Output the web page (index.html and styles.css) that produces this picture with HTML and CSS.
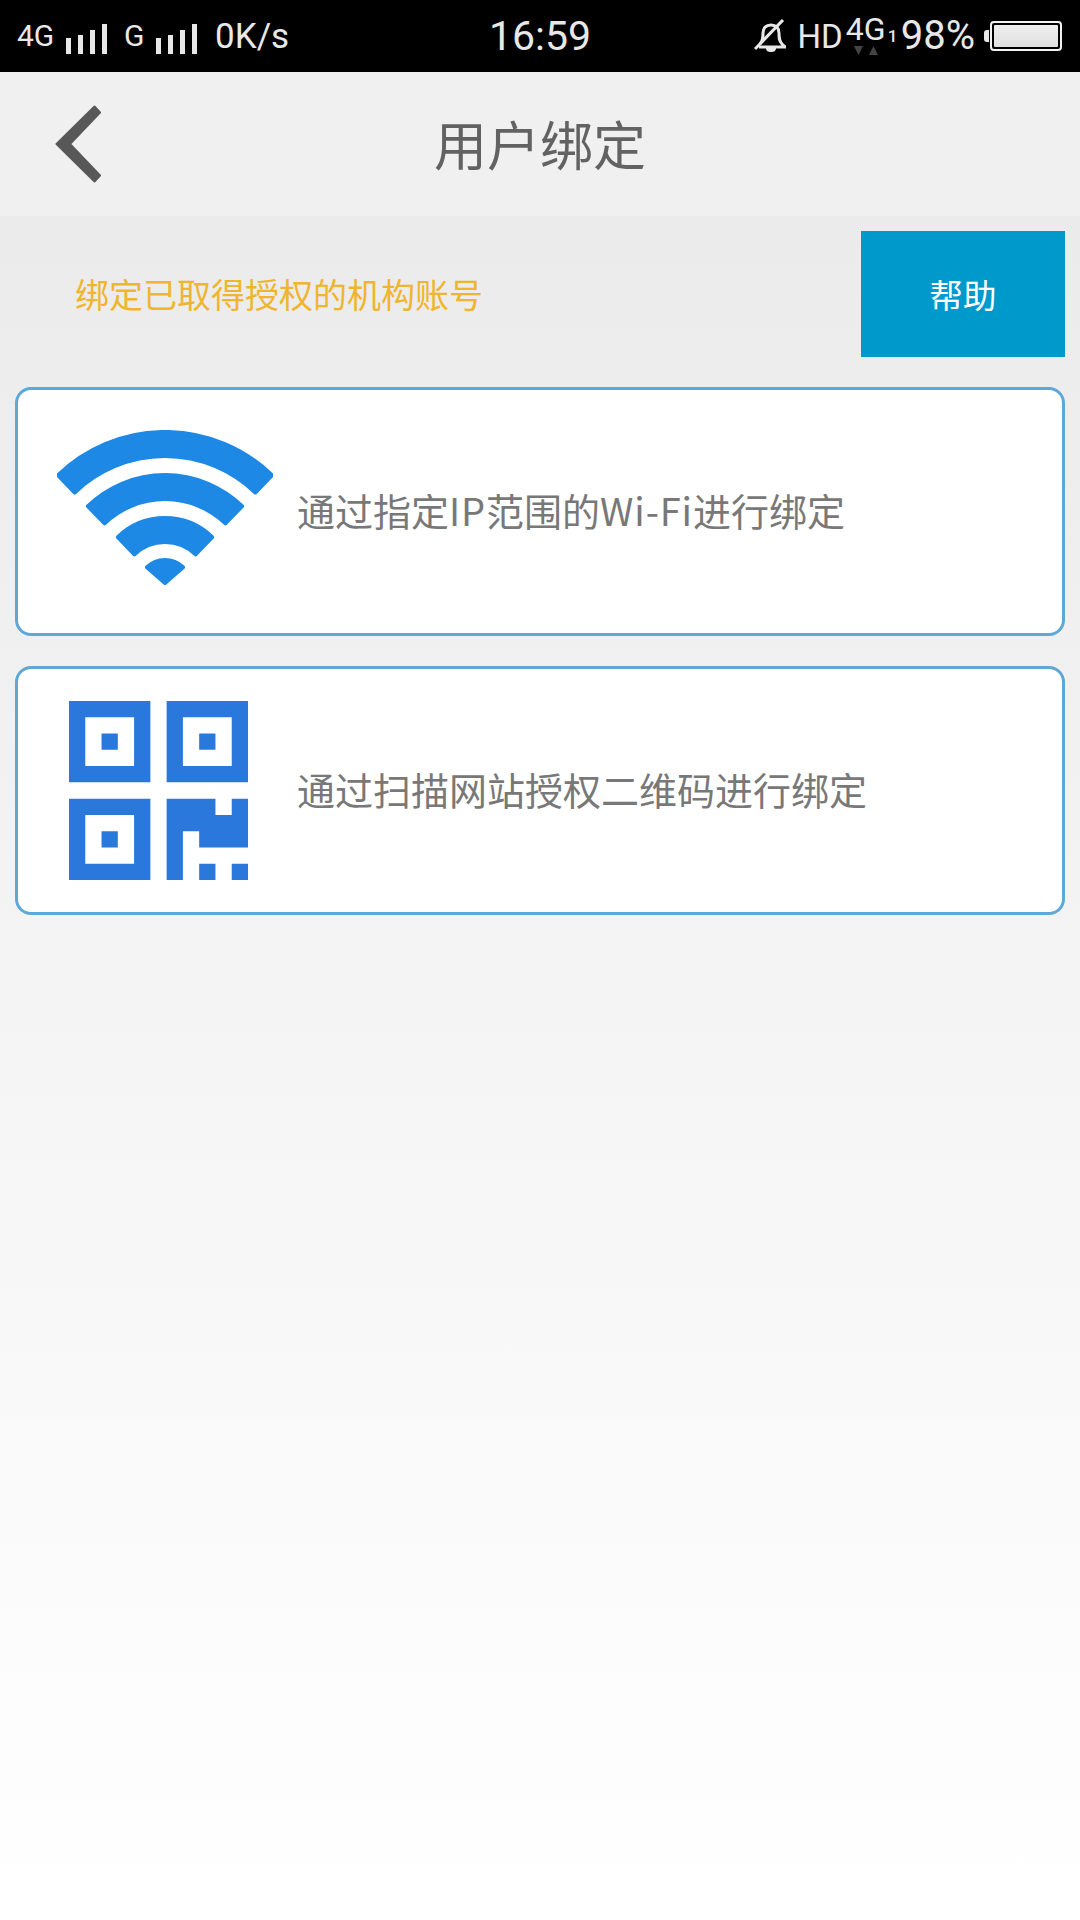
FILE: index.html
```html
<!DOCTYPE html>
<html lang="zh-CN">
<head>
<meta charset="utf-8">
<title>用户绑定</title>
<link rel="stylesheet" href="styles.css">
</head>
<body>
<div class="page">
  <div class="status">
    <div class="status-left">
      <span class="st-txt net-a">4G</span>
      <svg class="signal" viewBox="0 0 41 30"><path d="M0 14h5v16H0zM12 11h5v19h-5zM24 6h5v24h-5zM36 0h5v30h-5z"/></svg>
      <span class="st-txt net-b">G</span>
      <svg class="signal" viewBox="0 0 41 30"><path d="M0 14h5v16H0zM12 11h5v19h-5zM24 6h5v24h-5zM36 0h5v30h-5z"/></svg>
      <span class="st-txt speed">0K/s</span>
    </div>
    <div class="status-time">16:59</div>
    <div class="status-right">
      <svg class="bell" viewBox="0 0 34 34"><path class="bell-line" d="M6 25c3-3 3-6 3-11 0-5 3-8 8-8s8 3 8 8c0 5 0 8 3 11 1 1 3 3 4 3H5"/><path class="bell-line" d="M1 30 29 1"/><path class="bell-fill" d="M12 29h10c0 3-2 4-5 4s-5-1-5-4z"/></svg>
      <span class="st-txt hd">HD</span>
      <div class="net-stack">
        <span class="st-txt net-top">4G</span>
        <svg class="arrows" viewBox="0 0 24 10"><path d="M0 0h9L4.500 9zM15 9l4.500-9L24 9z"/></svg>
      </div>
      <span class="st-txt sim">1</span>
      <span class="st-txt batt-txt">98%</span>
      <div class="battery-nub"></div>
      <div class="battery"><div class="battery-fill"></div></div>
    </div>
  </div>

  <div class="header">
    <div class="back">
      <svg class="back-icon" viewBox="0 0 46 78"><path d="M1.500 39 39.500 1.500 45 7.500 15 39 45 70.500 39.500 76.500Z"/></svg>
    </div>
    <div class="title">用户绑定</div>
    <div class="header-end"></div>
  </div>

  <main class="content">
    <div class="notice">
      <span class="notice-text">绑定已取得授权的机构账号</span>
      <button class="help">帮助</button>
    </div>

    <div class="card">
      <div class="card-icon">
        <svg class="wifi" viewBox="0 0 216 157">
          <path d="M1 45.200A154 154 0 0 1 215 45.200L198.300 62.500A130 130 0 0 0 17.700 62.500Z"/>
          <path d="M30.900 76.200A111 111 0 0 1 185.100 76.200L168.400 93.400A87 87 0 0 0 47.600 93.400Z"/>
          <path d="M60.800 107.100A68 68 0 0 1 155.200 107.100L138.600 124.300A44 44 0 0 0 77.400 124.300Z"/>
          <path d="M89.900 137.300A26 26 0 0 1 126.100 137.300L108 153Z"/>
        </svg>
      </div>
      <span class="card-text">通过指定<span class="latin">IP</span>范围的<span class="latin">Wi-Fi</span>进行绑定</span>
    </div>

    <div class="card">
      <div class="card-icon">
        <svg class="qr" viewBox="0 0 11 11">
          <path fill-rule="evenodd" d="M0 0h5v5H0zM1 1v3h3V1zM2 2h1v1H2zM6 0h5v5H6zM7 1v3h3V1zM8 2h1v1H8zM0 6h5v5H0zM1 7v3h3V7zM2 8h1v1H2z"/>
          <path d="M6 6h3v1h1V6h1v3H8V8H7v3H6zM8 10h1v1H8zM10 10h1v1h-1z"/>
        </svg>
      </div>
      <span class="card-text">通过扫描网站授权二维码进行绑定</span>
    </div>
  </main>
</div>
</body>
</html>
```

FILE: styles.css
```css
* { box-sizing: border-box; }
html, body { margin: 0; padding: 0; }
body {
  width: 1080px;
  height: 1920px;
  overflow: hidden;
  font-family: "Noto Sans CJK SC", "Noto Sans", sans-serif;
}
.page { display: flex; flex-direction: column; height: 1920px; }

/* status bar */
.status {
  height: 72px;
  background: #000;
  display: grid;
  grid-template-columns: 1fr auto 1fr;
  align-items: center;
  color: #e8e8e8;
  flex: none;
}
.status-left { display: flex; align-items: center; padding-left: 17px; }
.status-right { display: flex; align-items: center; justify-content: flex-end; padding-right: 18px; }
.st-txt { font-family: Roboto, "Liberation Sans", sans-serif; font-weight: 400; line-height: 1; }
.net-a { font-size: 30px; width: 49px; }
.net-b { font-size: 30px; margin-left: 17px; width: 32px; }
.signal { width: 41px; height: 30px; fill: #e8e8e8; margin-top: 6px; }
.speed { font-size: 35px; margin-left: 18px; }
.status-time { font-family: Roboto, sans-serif; font-weight: 400; font-size: 41px; color: #e8e8e8; line-height: 1; }
.bell { width: 34px; height: 34px; margin-right: 10px; }
.bell-line { fill: none; stroke: #e8e8e8; stroke-width: 3; }
.bell-fill { fill: #e8e8e8; }
.hd { font-size: 33px; margin-right: 4px; }
.net-stack { display: flex; flex-direction: column; align-items: center; width: 38px; margin-top: -4px; }
.net-top { font-size: 32px; font-weight: 400; }
.arrows { width: 24px; height: 10px; fill: #444; margin-top: 1px; }
.sim { font-size: 17px; font-weight: 500; margin: 0 7px 0 3px; width: 6px; }
.batt-txt { font-size: 40px; margin-right: 9px; }
.battery-nub { width: 5px; height: 12px; background: #e8e8e8; border-radius: 3px 0 0 3px; }
.battery { width: 72px; height: 30px; border: 2px solid #f2f2f2; border-radius: 4px; padding: 2px; margin-left: 1px; }
.battery-fill { height: 100%; background: linear-gradient(#eeeeee, #e0e0e0); border-radius: 1px; }

/* header */
.header {
  height: 144px;
  flex: none;
  background: #f0f0f0;
  display: grid;
  grid-template-columns: 1fr auto 1fr;
  align-items: center;
}
.back { padding-left: 55px; display: flex; }
.back-icon { width: 46px; height: 78px; fill: #585858; stroke: #585858; stroke-width: 2; stroke-linejoin: round; }
.title { font-size: 53px; font-weight: 400; color: #626262; line-height: 1; margin-top: -2px; }

/* content */
.content {
  flex: 1;
  background: linear-gradient(#ebebeb 0%, #ffffff 100%);
  padding: 15px 15px 0;
  display: flex;
  flex-direction: column;
}
.notice { display: flex; align-items: center; justify-content: space-between; margin-bottom: 30px; }
.notice-text { font-size: 34px; color: #f0b52e; padding-left: 60px; font-weight: 400; line-height: 1; }
.help {
  width: 204px;
  height: 126px;
  background: #0099cc;
  border: 0;
  color: #fff;
  font: 400 33.500px "Noto Sans CJK SC", sans-serif;
  padding-bottom: 3px;
}
.card {
  height: 249px;
  background: #fff;
  border: 3px solid #5da8d6;
  border-radius: 16px;
  display: flex;
  align-items: center;
  margin-bottom: 30px;
}
.card-icon { width: 279px; flex: none; display: flex; justify-content: center; padding-left: 18px; }
.card-text { font-size: 38px; font-weight: 400; color: #787878; line-height: 1; margin-top: -4px; }
.latin { letter-spacing: 0.9px; }
.wifi { width: 216px; height: 157px; fill: #1e88e5; stroke: #1e88e5; stroke-width: 4; stroke-linejoin: round; margin-left: -3px; margin-top: -7px; }
.qr { width: 179px; height: 179px; fill: #2a78dc; margin-left: -17px; }
```
